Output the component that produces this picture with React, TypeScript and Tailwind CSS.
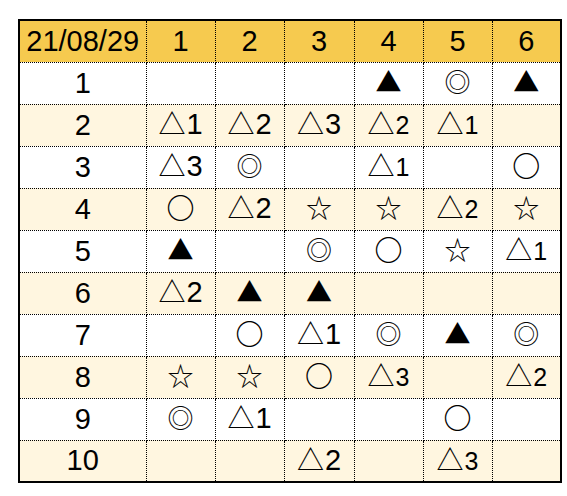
type Cell = { s?: string; n?: string; small?: boolean } | null;

const head = ['21/08/29', '1', '2', '3', '4', '5', '6'];

const T = (n: string, small = false): Cell => ({ s: '△', n, small });
const S = (s: string): Cell => ({ s });

const rows: Cell[][] = [
  [null, null, null, S('▲'), S('◎'), S('▲')],
  [T('1'), T('2'), T('3'), T('2', true), T('1', true), null],
  [T('3'), S('◎'), null, T('1', true), null, S('○')],
  [S('○'), T('2'), S('☆'), S('☆'), T('2', true), S('☆')],
  [S('▲'), null, S('◎'), S('○'), S('☆'), T('1', true)],
  [T('2'), S('▲'), S('▲'), null, null, null],
  [null, S('○'), T('1'), S('◎'), S('▲'), S('◎')],
  [S('☆'), S('☆'), S('○'), T('3', true), null, T('2', true)],
  [S('◎'), T('1'), null, null, S('○'), null],
  [null, null, T('2'), null, T('3', true), null],
];

const symSize: Record<string, string> = {
  '○': 'text-[28px] font-bold',
  '◎': 'text-[26px]',
  '☆': 'text-[26px]',
  '▲': 'text-[26px]',
  '△': 'text-[27px]',
};

function Mark({ c }: { c: Cell }) {
  if (!c || !c.s) return null;
  return (
    <span className="inline-flex items-baseline justify-center">
      <span className={`${symSize[c.s]} font-['Noto_Sans_CJK_JP',sans-serif] leading-none`}>{c.s}</span>
      {c.n && (
        <span
          className={
            c.small
              ? "ml-[1px] font-['Liberation_Sans',sans-serif] text-[25px] leading-none"
              : "ml-[1px] font-['Liberation_Sans',sans-serif] text-[29px] leading-none"
          }
        >
          {c.n}
        </span>
      )}
    </span>
  );
}

export default function App() {
  return (
    <div className="min-h-[496px] w-[567px] bg-white pl-[18px] pt-[19px]">
      <table className="w-[542px] table-fixed border-collapse border-2 border-black font-['Liberation_Sans',sans-serif] text-black">
        <colgroup>
          <col className="w-[127px]" />
          <col className="w-[69px]" />
          <col className="w-[69px]" />
          <col className="w-[70px]" />
          <col className="w-[69px]" />
          <col className="w-[69px]" />
          <col className="w-[69px]" />
        </colgroup>
        <thead>
          <tr className="h-[42px] bg-[#f6ca4f]">
            {head.map((h, i) => (
              <th key={i} className="border border-dotted border-black p-0 text-center text-[29px] font-normal leading-none">
                {h}
              </th>
            ))}
          </tr>
        </thead>
        <tbody>
          {rows.map((r, ri) => (
            <tr key={ri} className={ri % 2 === 0 ? 'h-[42px] bg-white' : 'h-[42px] bg-[#fff6e0]'}>
              <td className="border border-dotted border-black p-0 text-center text-[29px] leading-none">{ri + 1}</td>
              {r.map((c, ci) => (
                <td key={ci} className="border border-dotted border-black p-0 text-center align-middle">
                  <Mark c={c} />
                </td>
              ))}
            </tr>
          ))}
        </tbody>
      </table>
    </div>
  );
}
